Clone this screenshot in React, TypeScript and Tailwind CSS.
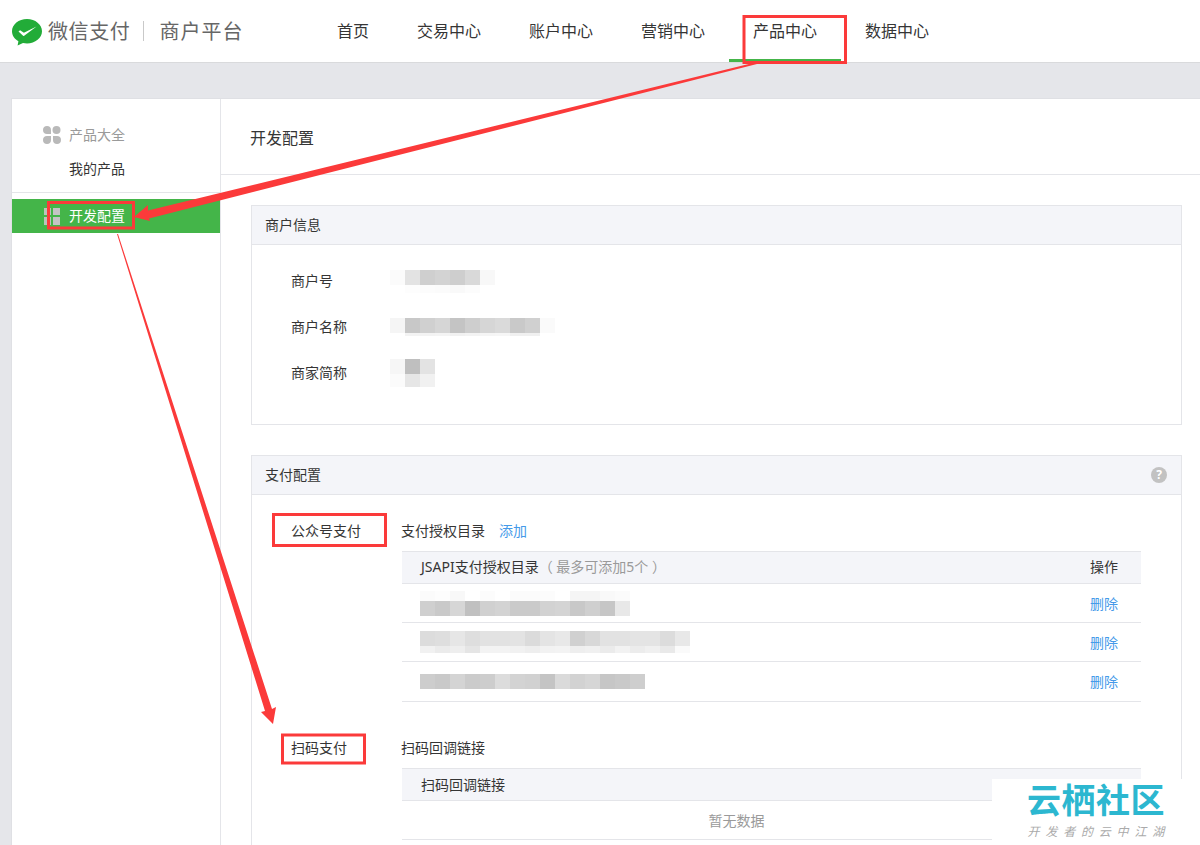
const navItems = ["首页", "交易中心", "账户中心", "营销中心", "产品中心", "数据中心"]

type MosaicRow = { h: number; cells: string[] }

const Mosaic = ({ rows, className }: { rows: MosaicRow[]; className?: string }) => (
    <div className={className}>
        {rows.map((row, i) => (
            <div key={i} className="flex">
                {row.cells.map((c, j) => (
                    <div key={j} className="w-[15px]" style={{ height: row.h, backgroundColor: c }} />
                ))}
            </div>
        ))}
    </div>
)

const merchantNo: MosaicRow[] = [
    { h: 15, cells: ["#fbfbfb", "#e3e3e3", "#cfcfcf", "#d3d3d3", "#cecece", "#d9d9d9", "#f8f8f8"] },
    { h: 8, cells: ["#ffffff", "#fdfdfd", "#fcfcfc", "#fbfbfb", "#f9f9f9", "#fcfcfc", "#ffffff"] },
]
const merchantName: MosaicRow[] = [
    { h: 15, cells: ["#f5f5f5", "#c8c8c8", "#d0d0d0", "#d6d6d6", "#c4c4c4", "#cecece", "#d6d6d6", "#dadada", "#c9c9c9", "#d0d0d0", "#fafafa"] },
    { h: 3, cells: ["#ffffff", "#f3f3f3", "#f3f3f3", "#f4f4f4", "#f1f1f1", "#f3f3f3", "#f5f5f5", "#f6f6f6", "#f0f0f0", "#f0f0f0", "#ffffff"] },
]
const merchantShort: MosaicRow[] = [
    { h: 15, cells: ["#f6f6f6", "#bfbfbf", "#e3e3e3"] },
    { h: 13, cells: ["#fbfbfb", "#e6e6e6", "#f1f1f1"] },
]
const dirRow1: MosaicRow[] = [
    { h: 10, cells: ["#fbfbfb", "#fdfdfd", "#f8f8f8", "#ffffff", "#fcfcfc", "#ffffff", "#fbfbfb", "#fbfbfb", "#fcfcfc", "#ffffff", "#f5f5f5", "#f5f5f5", "#f9f9f9", "#fbfbfb"] },
    { h: 15, cells: ["#cfcfcf", "#c9c9c9", "#d6d6d6", "#c0c0c0", "#d0d0d0", "#d3d3d3", "#cacaca", "#cacaca", "#d2d2d2", "#d4d4d4", "#c8c8c8", "#cfcfcf", "#c6c6c6", "#e8e8e8"] },
]
const dirRow2: MosaicRow[] = [
    { h: 15, cells: ["#dcdcdc", "#dedede", "#e6e6e6", "#dedede", "#e2e2e2", "#e2e2e2", "#e3e3e3", "#dbdbdb", "#e4e4e4", "#e8e8e8", "#d0d0d0", "#d8d8d8", "#e2e2e2", "#e2e2e2", "#e4e4e4", "#e4e4e4", "#dcdcdc", "#e8e8e8"] },
    { h: 7, cells: ["#f1f1f1", "#ebebeb", "#eeeeee", "#e5e5e5", "#f3f3f3", "#f3f3f3", "#f1f1f1", "#eeeeee", "#f2f2f2", "#f3f3f3", "#eeeeee", "#f0f0f0", "#ebebeb", "#f2f2f2", "#ececec", "#f0f0f0", "#e9e9e9", "#fafafa"] },
]
const dirRow3: MosaicRow[] = [
    { h: 15, cells: ["#cdcdcd", "#c9c9c9", "#d4d4d4", "#cbcbcb", "#cdcdcd", "#dcdcdc", "#d3d3d3", "#d1d1d1", "#c4c4c4", "#dadada", "#d2d2d2", "#d6d6d6", "#c6c6c6", "#c9c9c9", "#cecece"] },
]

const Panel = ({ title, help, children, className }: { title: string; help?: boolean; children: React.ReactNode; className?: string }) => (
    <section className={`border border-[#e4e5e9] ${className ?? ""}`}>
        <div className="flex h-[39px] items-center justify-between border-b border-[#e4e5e9] bg-[#f4f5f9] px-[13px] text-[14px] text-[#353535]">
            <span className="mb-[2px]">{title}</span>
            {help && (
                <span className="mr-[1px] flex h-4 w-4 items-center justify-center rounded-full bg-[#c2c2c2] text-[12px] font-bold leading-none text-white">
                    ?
                </span>
            )}
        </div>
        {children}
    </section>
)

const InfoRow = ({ label, rows }: { label: string; rows: MosaicRow[] }) => (
    <div className="flex h-[46px] items-center pl-[39px] text-[14px] text-[#353535]">
        <span className="mb-[2px] w-[99px]">{label}</span>
        <Mosaic rows={rows} />
    </div>
)

const DirRow = ({ rows, tall }: { rows: MosaicRow[]; tall?: boolean }) => (
    <div className={`flex items-center justify-between border-b border-[#e4e5e9] pl-[18px] pr-[23px] text-[14px] ${tall ? "h-[40px]" : "h-[39px]"}`}>
        <Mosaic rows={rows} />
        <a className="text-[#459ae9]">删除</a>
    </div>
)

const Annotations = () => (
    <svg className="pointer-events-none absolute left-0 top-0" width="1200" height="845" viewBox="0 0 1200 845">
        <g fill="none" stroke="#fb3a3a" strokeWidth="3">
            <rect x="744" y="16.5" width="101.5" height="46" />
            <rect x="48.5" y="202.5" width="85" height="25.5" />
            <rect x="273.5" y="514.5" width="112" height="31" />
            <rect x="282.5" y="735" width="82" height="28" />
        </g>
        <polygon fill="#fb3a3a" points="757,62 148,210.500 148,205 134,217 150,221 149,218.500 757,64" />
        <polygon fill="#fb3a3a" points="117,234 265,711 261,712 273,724 276,707 272,709 118,234" />
    </svg>
)

const App = () => {
    return (
        <div className="relative h-[845px] overflow-hidden bg-[#e5e6ea] font-['Noto_Sans','Noto_Sans_CJK_SC',sans-serif]">
            <header className="flex h-[63px] border-b border-[#d9dadc] bg-white">
                <div className="flex w-[313px] items-center pl-3">
                    <svg width="30" height="27" viewBox="0 0 30 27" className="mt-[2px]">
                        <path fill="#22ac38" d="M15 0C6.7 0 0 5.500 0 12.300c0 4.200 2.500 7.800 6.400 10L5.600 26.600l5.400-2.600c1.300.3 2.600.5 4 .5 8.300 0 15-5.500 15-12.200S23.300 0 15 0z" />
                        <path fill="#ffffff" d="M6.500 12.500l1.600-1.200 3.800 2.400 12.600-6.300-12.300 9.300c-.5.4-1.100.3-1.400-.2z" />
                    </svg>
                    <span className="ml-[6px] pt-[1px] text-[20px] leading-none tracking-[0.6px] text-[#666666]">微信支付</span>
                    <span className="ml-[13px] h-[20px] w-px bg-[#c9c9c9]" />
                    <span className="ml-[15px] pt-[1px] text-[20px] leading-none tracking-[1px] text-[#666666]">商户平台</span>
                </div>
                <nav className="flex h-[62px]">
                    {navItems.map((item) => (
                        <a
                            key={item}
                            className={`flex h-full items-center border-b-[3px] px-6 pt-[2px] text-[16px] leading-none text-[#353535] ${
                                item === "产品中心" ? "border-[#44b549]" : "border-transparent"
                            }`}
                        >
                            {item}
                        </a>
                    ))}
                </nav>
            </header>

            <div className="ml-[11px] mt-[35px] flex h-[800px] border-l border-t border-[#dfe0e4] bg-white">
                <aside className="w-[209px] shrink-0 border-r border-[#e4e5e9] text-[14px]">
                    <div className="border-b border-[#e4e5e9] pb-[6px] pt-[19px]">
                        <div className="flex h-[34px] items-center pl-[31px] text-[#9a9a9a]">
                            <svg width="18" height="18" viewBox="0 0 18 18" fill="#b9b9b9">
                                <path d="M4 0C6.500 0 8 1.500 8 4V8H4C1.500 8 0 6.500 0 4 0 1.500 1.500 0 4 0z" />
                                <circle cx="13.500" cy="4" r="4" />
                                <path d="M4 10H8V14C8 16.500 6.500 18 4 18 1.500 18 0 16.500 0 14 0 11.500 1.500 10 4 10z" />
                                <path d="M10 10H14C16.500 10 18 11.500 18 14 18 16.500 16.500 18 14 18 11.500 18 10 16.500 10 14z" />
                            </svg>
                            <span className="mb-[2px] ml-2">产品大全</span>
                        </div>
                        <div className="flex h-[34px] items-center pb-[2px] pl-[57px] text-[#353535]">我的产品</div>
                    </div>
                    <div className="mt-[6px] flex h-[34px] items-center bg-[#44b549] pl-[32px] text-white">
                        <div className="grid h-[17px] w-[16px] grid-cols-2 gap-[2px]">
                            <span className="bg-[#b9c4ba]" />
                            <span className="bg-[#c4c4c4]" />
                            <span className="bg-[#b9c4ba]" />
                            <span className="bg-[#c4c4c4]" />
                        </div>
                        <span className="mb-[2px] ml-[9px]">开发配置</span>
                    </div>
                </aside>

                <main className="flex-1">
                    <div className="flex h-[76px] items-center border-b border-[#e4e5e9] pl-[29px] pt-[3px] text-[16px] text-[#353535]">
                        开发配置
                    </div>
                    <div className="pl-[30px] pr-[18px] pt-[30px]">
                        <Panel title="商户信息" className="h-[220px]">
                            <div className="pt-[13px]">
                                <InfoRow label="商户号" rows={merchantNo} />
                                <InfoRow label="商户名称" rows={merchantName} />
                                <InfoRow label="商家简称" rows={merchantShort} />
                            </div>
                        </Panel>

                        <Panel title="支付配置" help className="mt-[30px] h-[420px]">
                            <div className="flex pt-[18px] text-[14px] text-[#353535]">
                                <div className="w-[150px] shrink-0 pl-[39px]">
                                    <div className="flex h-[38px] items-start pt-[7px]">公众号支付</div>
                                </div>
                                <div className="w-[739px]">
                                    <div className="-ml-px flex h-[38px] items-start gap-[14px] pt-[7px]">
                                        <span>支付授权目录</span>
                                        <a className="text-[#459ae9]">添加</a>
                                    </div>
                                    <div className="flex h-[33px] items-center justify-between border-y border-[#e4e5e9] bg-[#f4f5f9] pb-[2px] pl-[19px] pr-[23px]">
                                        <span>
                                            JSAPI支付授权目录
                                            <span className="text-[#9a9a9a]">（ 最多可添加5个 ）</span>
                                        </span>
                                        <span>操作</span>
                                    </div>
                                    <DirRow rows={dirRow1} />
                                    <DirRow rows={dirRow2} />
                                    <DirRow rows={dirRow3} tall />
                                </div>
                            </div>
                            <div className="mt-[28px] flex text-[14px] text-[#353535]">
                                <div className="w-[150px] shrink-0 pl-[39px]">
                                    <div className="flex h-[38px] items-start pt-[7px]">扫码支付</div>
                                </div>
                                <div className="w-[739px]">
                                    <div className="-ml-px flex h-[38px] items-start pt-[7px]">扫码回调链接</div>
                                    <div className="flex h-[33px] items-center border-y border-[#e4e5e9] bg-[#f4f5f9] pl-[19px]">
                                        扫码回调链接
                                    </div>
                                    <div className="flex h-[39px] items-center justify-center border-b border-[#e4e5e9] pr-[70px] text-[#9a9a9a]">
                                        暂无数据
                                    </div>
                                </div>
                            </div>
                        </Panel>
                    </div>
                </main>
            </div>

            <Annotations />

            <div className="absolute bottom-0 right-0 flex h-[66px] w-[208px] flex-col items-end bg-white pr-[35px]">
                <span className="mt-[-1px] text-[34px] font-bold leading-[44px] tracking-[0.5px] text-[#2cb7d0]">云栖社区</span>
                <span className="mr-[-5px] text-[12px] italic leading-[20px] tracking-[5.8px] text-[#aaaaaa]">开发者的云中江湖</span>
            </div>
        </div>
    )
}

export default App
